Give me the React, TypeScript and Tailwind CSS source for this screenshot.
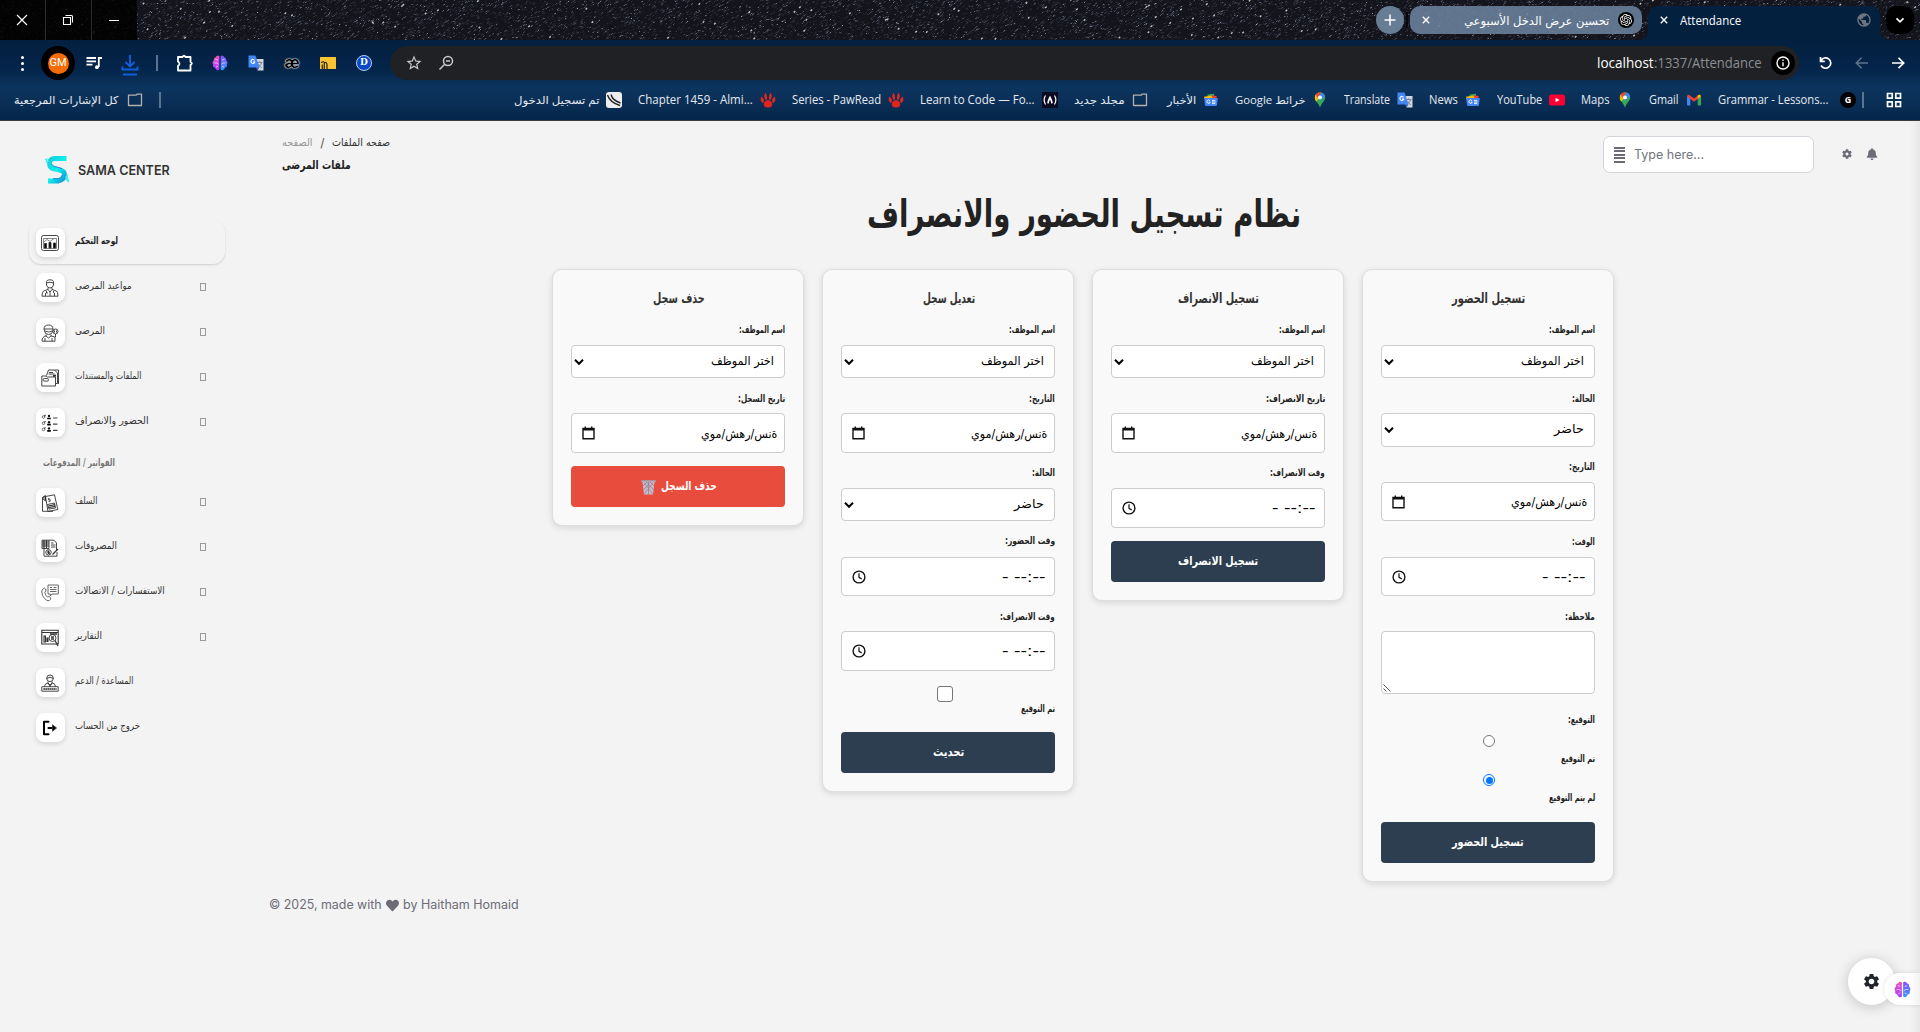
import { useLayoutEffect, useRef, useState } from "react";
import type { ReactNode } from "react";
import { MdStarOutline, MdPublic, MdSettings } from "react-icons/md";
import { FaBell, FaCog, FaHeart } from "react-icons/fa";
import { SiOpenai } from "react-icons/si";

/* Text set to a fixed advance width, whatever face ends up rendering it. */
function Fit({ w, children, rtl = false, className = "" }: { w: number; children: ReactNode; rtl?: boolean; className?: string }) {
  const ref = useRef<HTMLSpanElement>(null);
  const [scale, setScale] = useState(1);
  useLayoutEffect(() => {
    if (ref.current) setScale(w / ref.current.offsetWidth);
  }, [w]);
  return (
    <span dir="ltr" className={"inline-flex shrink-0 justify-start " + className} style={{ width: w }}>
      <span ref={ref} dir={rtl ? "rtl" : "ltr"} className="inline-block shrink-0 origin-left whitespace-nowrap" style={{ transform: `scaleX(${scale})` }}>
        {children}
      </span>
    </span>
  );
}

/* ---------- browser chrome ---------- */

function Stars() {
  let s = 7;
  const rnd = () => {
    s = (s * 16807) % 2147483647;
    return s / 2147483647;
  };
  const tints = ["#c9cbe0", "#8f93b5", "#55586f", "#3d4054", "#2b2d3c", "#e9e6e2"];
  const buckets = tints.map(() => "");
  for (let i = 0; i < 9500; i++) {
    const x = (rnd() * 1920).toFixed(1);
    const y = (rnd() * 40).toFixed(1);
    const k = Math.floor(Math.pow(rnd(), 0.6) * 5);
    const b = rnd() < 0.009 ? 5 : k;
    const r = b === 5 ? 1.5 : 1;
    buckets[b] += `M${x} ${y}l${r} ${-r}`;
  }
  return (
    <svg className="absolute inset-0 h-10 w-full" viewBox="0 0 1920 40">
      {buckets.map((d, i) => (
        <path key={i} d={d} stroke={tints[i]} strokeWidth={i === 5 ? 1.4 : 1} opacity={0.8} fill="none" />
      ))}
    </svg>
  );
}

const Brain = ({ className = "size-4" }: { className?: string }) => (
  <svg viewBox="0 0 16 16" className={className}>
    <defs>
      <linearGradient id="brainL" x1="0" y1="0" x2="0.3" y2="1">
        <stop offset="0" stopColor="#ff8a3c" />
        <stop offset="0.35" stopColor="#e14bd0" />
        <stop offset="1" stopColor="#b03cff" />
      </linearGradient>
      <linearGradient id="brainR" x1="0" y1="0" x2="0" y2="1">
        <stop offset="0" stopColor="#8b4dff" />
        <stop offset="1" stopColor="#2aa0ff" />
      </linearGradient>
    </defs>
    <path d="M7.4 1.2C6 .2 4.2.8 3.8 2.2C2 2.4 1.4 4 1.9 5.2C.3 6.2.1 8.3 1.2 9.4C.6 11.2 1.6 12.6 3.2 12.8C3.6 15.2 6.2 16 7.4 14.6Z" fill="url(#brainL)" />
    <path d="M8.6 1.2C10 .2 11.8.8 12.2 2.2C14 2.4 14.6 4 14.1 5.2C15.7 6.2 15.9 8.3 14.8 9.4C15.4 11.2 14.4 12.6 12.8 12.8C12.4 15.2 9.8 16 8.6 14.6Z" fill="url(#brainR)" />
    <path d="M3.5 4.5L6 5M2.5 8H5.500L6.200 9.500M4 12L6 11.300M12.500 4.500L10 5M13.500 8H10.500L9.800 9.500M12 12L10 11.300" stroke="#e6c6ff" strokeWidth="0.9" fill="none" />
  </svg>
);

const Translate = () => (
  <svg viewBox="0 0 16 16" className="size-4">
    <path d="M6 4H15.500V15.500H9.500Z" fill="#d3d7dc" />
    <path d="M9 7.500H14.500M11.700 6.300V7.500M13.600 7.500C13 10 11 11.800 9.800 12.500M10.500 9C11.200 10.800 12.500 12 13.800 12.600" stroke="#6f7d8c" strokeWidth="0.9" fill="none" />
    <path d="M.5.5H7.500L11.500 12.500H.5Z" fill="#4285f4" />
    <path d="M8 12.500H11.500L9.300 15.500Z" fill="#2a56c6" />
    <path d="M6.600 5.400A2 2 0 1 0 6.800 7H5" stroke="#fff" strokeWidth="1.100" fill="none" />
  </svg>
);

const Folder = () => (
  <svg viewBox="0 0 16 16" className="size-4" fill="none" stroke="#b4b0ad" strokeWidth="1.300" strokeLinejoin="round">
    <path d="M1.500 3.200H9L10 2.200H14.500V13.500H1.500Z" />
  </svg>
);

const Paw = () => (
  <svg viewBox="0 0 16 16" className="size-4" fill="#e0261e">
    <path d="M8 8.300C10.300 8.300 12.400 10.300 12.200 12.700C12 14.900 10 15.500 8 15.500S4 14.900 3.800 12.700C3.600 10.300 5.700 8.300 8 8.300Z" />
    <path d="M5.200 8L4.100 4L5.300.4L6.900 3.500L7 7.500ZM10.800 8L11.900 4L10.700.4L9.100 3.500L9 7.500ZM2.800 11.200L.7 8.500L1 4.200L3.200 6.200L4.200 9.500ZM13.200 11.200L15.300 8.500L15 4.200L12.800 6.200L11.800 9.500Z" />
  </svg>
);

const Pin = () => (
  <svg viewBox="0 0 16 16" className="size-4">
    <path d="M8 .3A5.300 5.300 0 0 1 13.200 5.500C13.200 9 9.500 10.500 8 15.800C6.500 10.500 2.800 9 2.800 5.500A5.300 5.300 0 0 1 8 .3Z" fill="#34a853" />
    <path d="M2.800 5.500A5.300 5.300 0 0 1 4 2L8 5.500L4.300 9.500C3.400 8.400 2.800 7.200 2.800 5.500Z" fill="#fbbc04" />
    <path d="M4 2A5.300 5.300 0 0 1 9.500.5L5 6Z" fill="#ea4335" />
    <path d="M9.500.5A5.300 5.300 0 0 1 13 4.200L8 9L6.500 6.500Z" fill="#4285f4" />
    <circle cx="8" cy="5.400" r="1.900" fill="#fff" />
  </svg>
);

const GNews = () => (
  <svg viewBox="0 0 16 16" className="size-4">
    <path d="M4.500 2.500L11 1.800V6H4.500Z" fill="#34a853" />
    <path d="M9 3L13.800 4.200L13 8H8Z" fill="#ea4335" />
    <path d="M1 4.800L8.500 3.500L10 8H2Z" fill="#fbbc04" />
    <path d="M1.200 6H14.800L14 13Q13.900 14 13 14H3Q2.100 14 2 13Z" fill="#4285f4" />
    <path d="M7 8.700A1.700 1.700 0 1 0 7.200 10.200H5.900M9 8.400H12.200M9 10H12.700M9 11.600H12.200" stroke="#fff" strokeWidth="0.900" fill="none" />
  </svg>
);

const YouTube = () => (
  <svg viewBox="0 0 16 16" className="size-4">
    <rect x="0" y="2.500" width="16" height="11" rx="2.500" fill="#ff0033" />
    <path d="M6.500 5.700L10.500 8L6.500 10.300Z" fill="#fff" />
  </svg>
);

const Gmail = () => (
  <svg viewBox="0 0 16 16" className="size-4">
    <path d="M1 4V12.500Q1 13.500 2 13.500H4.300V6Z" fill="#4285f4" />
    <path d="M15 4V12.500Q15 13.500 14 13.500H11.700V6Z" fill="#34a853" />
    <path d="M1 4.200Q1.500 2 3.500 3L8 6.400L12.500 3Q14.500 2 15 4.200L11.700 6.900L8 9.700L4.300 6.900Z" fill="#ea4335" />
    <path d="M11.700 3.600L12.500 3Q14.500 2 15 4.200L11.700 6.900Z" fill="#fbbc04" />
  </svg>
);

const Fcc = () => (
  <span className="flex size-4 items-center justify-center bg-[#0a0a23]">
    <svg viewBox="0 0 16 16" className="size-4" fill="none" stroke="#fff" strokeWidth="1.200">
      <path d="M3.500 3.500Q.8 8 3.500 12.500M12.500 3.500Q15.200 8 12.500 12.500" />
      <path d="M6 11.300Q6.500 8 8 5.500Q9.500 8 10 11.300" strokeWidth="1.700" />
    </svg>
  </span>
);

const Swoosh = () => (
  <svg viewBox="0 0 16 16" className="size-4">
    <rect width="16" height="16" rx="3" fill="#eceded" />
    <path d="M1.500 3Q4 10.500 14 13.500M5 2.500Q6.500 8.500 14.500 11" stroke="#222" strokeWidth="1.400" fill="none" />
  </svg>
);

const GDot = () => <span className="flex size-4 items-center justify-center rounded-full bg-black text-[9px] font-bold text-white">G</span>;

type Mark = { t: string; w: number; slot?: string; rtl?: boolean; icon: ReactNode };
const marks: Mark[] = [
  { t: "تم تسجيل الدخول", w: 85, rtl: true, icon: <Swoosh /> },
  { t: "Chapter 1459 - Almi...", w: 115, icon: <Paw /> },
  { t: "Series - PawRead", w: 89, icon: <Paw /> },
  { t: "Learn to Code — Fo...", w: 115, icon: <Fcc /> },
  { t: "مجلد جديد", w: 51, rtl: true, icon: <Folder /> },
  { t: "الأخبار", w: 29, slot: "pl-[3px]", rtl: true, icon: <GNews /> },
  { t: "خرائط Google", w: 70, rtl: true, icon: <Pin /> },
  { t: "Translate", w: 46, icon: <Translate /> },
  { t: "News", w: 29, icon: <GNews /> },
  { t: "YouTube", w: 45, icon: <YouTube /> },
  { t: "Maps", w: 29, icon: <Pin /> },
  { t: "Gmail", w: 30, icon: <Gmail /> },
  { t: "Grammar - Lessons...", w: 110, slot: "w-[115px]", icon: <GDot /> },
];

function TabStrip() {
  return (
    <div dir="ltr" className="relative flex h-10 items-center overflow-hidden bg-[#14151c]">
      <Stars />
      <div className="relative flex h-10 w-[137px] shrink-0 bg-black/85 text-white">
        <span className="flex w-[45.5px] items-center justify-center border-r border-[#2c2c30]">
          <svg viewBox="0 0 12 12" className="size-3" stroke="currentColor" strokeWidth="1.200"><path d="M1 1L11 11M11 1L1 11" /></svg>
        </span>
        <span className="flex w-[46px] items-center justify-center border-r border-[#2c2c30]">
          <svg viewBox="0 0 12 12" className="size-3" fill="none" stroke="currentColor" strokeWidth="1.100"><path d="M1.500 3.500H8.500V10.500H1.500ZM3.500 1.500H9.500Q10.500 1.500 10.500 2.500V8.500" /></svg>
        </span>
        <span className="flex flex-1 items-center justify-center">
          <span className="h-px w-2.5 bg-white" />
        </span>
      </div>
      <div className="relative ml-auto flex h-10 items-start pt-1.5 pr-1.5">
        <span className="flex size-7 items-center justify-center rounded-full bg-[#667d93] text-white">
          <svg viewBox="0 0 12 12" className="size-3" stroke="currentColor" strokeWidth="1.500"><path d="M6 .5V11.500M.5 6H11.500" /></svg>
        </span>
        <span className="mt-1.5 mr-0.5 ml-0.5 h-4 w-0.5 bg-black/70" />
        <div className="flex h-7 w-[232px] items-center rounded-[10px] bg-[#68809a]/90 pl-[12px] text-white">
          <svg viewBox="0 0 10 10" className="size-2 shrink-0" stroke="currentColor" strokeWidth="1.700"><path d="M1 1L9 9M9 1L1 9" /></svg>
          <Fit w={145} rtl className="mt-0.5 ml-[34px] font-['DejaVu_Sans'] text-[12px] leading-4">تحسين عرض الدخل الأسبوعي</Fit>
          <span className="ml-[9px] flex size-4 items-center justify-center rounded-full bg-black"><SiOpenai className="size-3" /></span>
        </div>
        <div className="relative ml-1.5 flex h-[34px] w-[232px] items-center rounded-t-[10px] bg-[#03203f] pb-1.5 pl-3 text-white">
          <svg viewBox="0 0 10 10" className="absolute bottom-0 -left-2.5 size-2.5" fill="#03203f"><path d="M10 0V10H0Q10 10 10 0Z" /></svg>
          <svg viewBox="0 0 10 10" className="absolute -right-2.5 bottom-0 size-2.5" fill="#03203f"><path d="M0 0V10H10Q0 10 0 0Z" /></svg>
          <svg viewBox="0 0 10 10" className="size-2 shrink-0" stroke="currentColor" strokeWidth="1.700"><path d="M1 1L9 9M9 1L1 9" /></svg>
          <Fit w={61} className="mt-0.5 ml-[12px] font-['Open_Sans'] text-[12px] leading-4">Attendance</Fit>
          <MdPublic className="mr-2 ml-auto size-4 text-[#6c7580]" />
        </div>
        <span className="ml-1.5 flex size-7 items-center justify-center rounded-[10px] bg-black text-white">
          <svg viewBox="0 0 10 10" className="size-2.5" fill="none" stroke="currentColor" strokeWidth="1.700"><path d="M1.500 3.300L5 6.800L8.500 3.300" /></svg>
        </span>
      </div>
    </div>
  );
}

function AddressRow() {
  return (
    <div className="flex h-[46px] items-center text-white">
      <span className="ml-[13px] flex w-[18px] flex-col items-center gap-[3px]">
        <i className="size-[3px] rounded-full bg-white" /><i className="size-[3px] rounded-full bg-white" /><i className="size-[3px] rounded-full bg-white" />
      </span>
      <span className="ml-[10px] flex size-[34px] items-center justify-center rounded-full bg-black">
        <span className="flex size-[21px] items-center justify-center rounded-full bg-[#f46c05] font-['Roboto'] text-[11px]">GM</span>
      </span>
      <svg viewBox="0 0 18 18" className="ml-[10px] size-[18px]" fill="none" stroke="#fff" strokeWidth="1.800">
        <path d="M1.500 4H11M1.500 7.300H11M1.500 10.600H7.500M13.800 13V4H17" /><circle cx="11.900" cy="13.200" r="1.900" fill="#fff" stroke="none" />
      </svg>
      <svg viewBox="0 0 18 22" className="mt-1 ml-[18px] h-[22px] w-[18px]" fill="none" stroke="#0f5fd6" strokeWidth="1.900">
        <path d="M9 1V12M4.500 8L9 12.500L13.500 8M1.500 12.500V15.500H16.500V12.500M2 20.500H16" />
      </svg>
      <span className="ml-[17px] h-4 w-[2px] bg-[#5b7590]" />
      <svg viewBox="0 0 18 18" className="ml-[18px] size-[18px]" fill="none" stroke="#fff" strokeWidth="1.800" strokeLinejoin="round">
        <path d="M2 3H6.500Q8 .5 9.500 3H14.500V8Q17.200 9 14.500 11V16.500H2V12Q5 9.800 2 7.500Z" />
      </svg>
      <Brain className="ml-[18px] size-4" />
      <span className="ml-5"><Translate /></span>
      <span className="ml-5 flex w-4 justify-center font-['Liberation_Sans'] text-[17px] leading-4 font-bold text-black [text-shadow:0_0_1px_#fff,0_0_1px_#fff,0_0_2px_#fff]">æ</span>
      <svg viewBox="0 0 16 12" className="ml-5 h-3 w-4"><rect width="16" height="12" rx="0.500" fill="#f7c531" /><path d="M2.300 12V7.500M4.300 12V5.500Q7 5 7 8V12M1 5.500L4 4.500" stroke="#2b2208" strokeWidth="1.200" fill="none" /></svg>
      <span className="ml-5 flex size-4 items-center justify-center rounded-full border border-[#b9cffc] bg-[#0a48c8] font-['DejaVu_Serif'] text-[9px] font-bold">D</span>
      <div className="ml-[18px] flex h-[34px] w-[1409px] items-center rounded-full bg-[#202124]">
        <MdStarOutline className="ml-[15px] size-[18px] text-[#c7c9cc]" />
        <svg viewBox="0 0 16 16" className="ml-[15px] size-4" fill="none" stroke="#c7c9cc" strokeWidth="1.500"><circle cx="10" cy="6" r="4.500" /><path d="M6.700 9.300L1.500 14.500M8 6H12" /></svg>
        <span className="ml-auto flex font-['Open_Sans'] text-[14px] leading-5">
          <Fit w={57}>localhost</Fit>
          <Fit w={108} className="text-[#8b8e92]">:1337/Attendance</Fit>
        </span>
        <span className="mr-1 ml-[9px] flex size-6 items-center justify-center rounded-full bg-black">
          <svg viewBox="0 0 14 14" className="size-3.5" fill="none" stroke="#fff" strokeWidth="1.400"><circle cx="7" cy="7" r="6" /><path d="M7 6.200V10.200M7 3.600V5" /></svg>
        </span>
      </div>
      <svg viewBox="0 0 14 14" className="ml-[20px] size-3.5" fill="none" stroke="#fff" strokeWidth="1.700"><path d="M1.500 1V5.300H5.800M1.800 5A5.200 5.200 0 1 1 2 9.500" /></svg>
      <svg viewBox="0 0 14 14" className="ml-[22px] size-3.5" fill="none" stroke="#5d748d" strokeWidth="1.500"><path d="M13 7H1.500M6.500 1.800L1.300 7L6.500 12.200" /></svg>
      <svg viewBox="0 0 14 14" className="ml-[22px] size-3.5" fill="none" stroke="#fff" strokeWidth="1.700"><path d="M1 7H12.500M7.500 1.800L12.700 7L7.500 12.200" /></svg>
    </div>
  );
}

function BookmarksRow() {
  return (
    <div className="flex h-[27px] items-center font-['Open_Sans','DejaVu_Sans'] text-[12px] leading-4 text-[#e6eaf0]">
      <Fit w={104} rtl className="mt-0.5 ml-[14px] font-['DejaVu_Sans'] text-[11px]">كل الإشارات المرجعية</Fit>
      <span className="ml-[9px]"><Folder /></span>
      <span className="ml-[16px] h-4 w-[2px] bg-[#5b7590]" />
      <div className="ml-auto flex gap-4">
        {marks.map((m, i) => (
          <span key={i} className="flex items-center gap-[7px]">
            <span className={m.slot}><Fit w={m.w} rtl={m.rtl} className={m.rtl ? "text-[11px]" : ""}>{m.t}</Fit></span>
            {m.icon}
          </span>
        ))}
      </div>
      <span className="ml-[6px] h-4 w-[2px] bg-[#5b7590]" />
      <svg viewBox="0 0 16 16" className="mr-[18px] ml-[22px] size-4" fill="none" stroke="#fff" strokeWidth="1.700"><path d="M1.500 1.500H6.200V6.200H1.500ZM9.800 1.500H14.500V6.200H9.800ZM1.500 9.800H6.200V14.500H1.500ZM9.800 9.800H14.500V14.500H9.800Z" /></svg>
    </div>
  );
}

/* ---------- sidebar ---------- */

const Ic = ({ children }: { children: ReactNode }) => (
  <svg viewBox="0 0 18 18" className="mr-px size-[18px]" fill="none" stroke="#333" strokeWidth="0.900">{children}</svg>
);

const icons: Record<string, ReactNode> = {
  dash: <Ic><rect x="0.500" y="1.500" width="17" height="15" rx="2" /><path d="M2.500 14.500V4.500H15.500V14.500ZM3 8L6 5.500L9 7.500L13 4.500" stroke="#777" /><path d="M3.500 14V9.500H5.500V14ZM8 14V8.500H10V14ZM12.500 14V9H14.500V14Z" fill="#000" /></Ic>,
  doctor: <Ic><path d="M5.500 4Q5 .8 9 .8T12.500 4V6Q12 9 9 9T5.500 6ZM5.500 4Q9 2.500 12.500 4M7 9V10.500L9 13L11 10.500V9M7 10.500L2.500 12Q1 13 1 17.200H17Q17 13 15.500 12L11 10.500M9 13V17M4.500 14V17M13.500 14V17M5.500 12V14H7M12.500 12V14" /></Ic>,
  patient: <Ic><path d="M3 5Q3 1 7.500 1T12 5V7Q11 10.500 7.500 10.500T3.500 7ZM3 5H12M4 7Q7.500 9 11.500 7M5 10.500V12L7.500 14L10 12V10.500M5 12Q1 12.500 1 17.200H14V13L10 12M4 14V17M11 14V17" /><circle cx="14.500" cy="7.500" r="2.500" /><path d="M14.500 10V13M13.500 6.500V8.500M15.500 6.500V8.500" /></Ic>,
  files: <Ic><path d="M.8 7H5L6.500 8H14.500V17H.8ZM5.500 6.500L7.500 1H13.500L16.500 4V14.500H15M13.500 1H17.500V15M8 3.500H12M7.500 5H13.500" /><rect x="2" y="9.500" width="5.500" height="2.600" rx="1.300" /><path d="M12 7L15 6.500" strokeWidth="1.800" /></Ic>,
  attend: <Ic><g stroke="#555" strokeWidth="0.800"><circle cx="2.500" cy="3" r="1.300" /><circle cx="2.500" cy="9.200" r="1.300" /><circle cx="2.500" cy="15.400" r="1.300" /></g><g fill="#111" stroke="none"><circle cx="8" cy="2" r="1.200" /><circle cx="8" cy="8.200" r="1.200" /><circle cx="8" cy="14.400" r="1.200" /></g><path d="M6.200 4.500H9.800M6.200 10.700H9.800M6.200 16.900H9.800" strokeWidth="1.700" stroke="#000" /><path d="M12 4H16.500M12 10.200H16.500M12 16.400H16.500M3 2.500L4.500 1M3 8.700L4.500 7.200M3 14.900L4.500 13.400" strokeWidth="1.200" stroke="#444" /></Ic>,
  advance: <Ic><path d="M4.500 2.500L13.500.8L16.800 15.500L7 17.500ZM1.500 17.300V3.500L4 2.500V6M1.500 17.300H12M6.500 10.500L13.500 9L14.500 14L8 15Z" /><path d="M8.500 4.500H7.500V5.800H9.200V7.300H7.500M2 3L4.500 1.500V7L2 5Z" /><path d="M7.500 12L14 10.600M8 13.500L14 12.400" strokeWidth="1.200" /></Ic>,
  spend: <Ic><path d="M1 1.200H8V9.500H1ZM8 1.200H13L15.500 4V11M3 9.500V17.200H16V13M10 4H12.500M10 6H14.500M10 8H14.500" /><path d="M1 3H8M1 5H8M1 7H8M3 1V9M5.500 1V9" strokeWidth="1.200" /><circle cx="7.500" cy="13.300" r="2.700" /><path d="M8.300 12.200H7V13.300H8.200V14.500H6.800M11.500 15.500L17 10" strokeWidth="1.200" /></Ic>,
  phone: <Ic><path d="M7 1H17.300V10H11L9.300 12V10H7ZM9 3.500H11M12.500 3.500H15.500M9 5.500H15.500M9 7.500H15.500M1.500 5.500L3.500 4Q5 4.500 5 7L3.800 8.500Q4.500 11.500 6.500 13L8 12.500Q10 13.500 9.800 15L8 16.800Q6 17 3.500 14.500T.8 8Q.8 6.500 1.500 5.500Z" stroke="#555" /></Ic>,
  report: <Ic><path d="M.8 1.200H17.200V15H.8ZM.8 3.500H17.200M3 13V7H4.500V13ZM6 13V9H7V13" strokeWidth="1.100" /><circle cx="11.500" cy="9" r="3.500" /><path d="M14 11.500L17 17M10 8H13M10 10H13M9 5H16" strokeWidth="1.300" /></Ic>,
  support: <Ic><circle cx="9" cy="4.300" r="3.300" /><path d="M5.500 4.500Q9 2 12.500 4.500M7 7.500V9L9 11L11 9V7.500M3.500 12.500Q3.500 9.500 7 9M14.500 12.500Q14.500 9.500 11 9M7 9L9 12.500L11 9M.8 12.700H17.200V17.200H.8Z" /><path d="M2.500 15H15.500" strokeWidth="1.800" strokeDasharray="1.300 0.700" /></Ic>,
  exit: <Ic><path d="M7.500 2.800H3V15.200H7.500M7.500 9H13" stroke="#000" strokeWidth="2" strokeLinejoin="round" strokeLinecap="round" /><path d="M11.500 5.800L15.500 9L11.500 12.200Z" fill="#000" /></Ic>,
};

function NavItem({ icon, t, w, open = true, active = false }: { icon: string; t: string; w: number; open?: boolean; active?: boolean }) {
  return (
    <div className={"flex h-[45px] items-center rounded-[12px] pr-[19px] pl-[7px] " + (active ? "text-[#222]" : "text-[#333]")}>
      <span className="flex size-[29px] shrink-0 items-center justify-center rounded-lg bg-white shadow-[0_2px_5px_rgba(0,0,0,0.13)]">{icons[icon]}</span>
      <Fit w={w} rtl className={"mb-[3px] ml-[10px] text-[10px] leading-4 " + (active ? "font-bold" : "")}>{t}</Fit>
      {open && <span className="mb-px ml-auto h-2 w-1.5 border border-[#9a9a9a]" />}
    </div>
  );
}

function Sidebar() {
  return (
    <aside className="flex w-[246px] shrink-0 flex-col pt-[34px] pl-[29px] font-['DejaVu_Sans']">
      <div className="flex h-[30px] items-center pl-[15px]">
        <svg viewBox="0 0 25 30" className="h-[30px] w-[25px]" fill="none">
          <defs>
            <linearGradient id="logo" x1="0" y1="0" x2="1" y2="1">
              <stop offset="0" stopColor="#16c9dc" /><stop offset="0.500" stopColor="#0ff2ea" /><stop offset="1" stopColor="#1289d8" />
            </linearGradient>
          </defs>
          <path d="M22.500 3.500H11Q5.500 3.500 5.500 8.500T11 14L15 15Q20.500 15.500 20.500 20T14.500 26H4" stroke="url(#logo)" strokeWidth="4.800" />
          <path d="M7.500 9Q9 11.700 12 11.800L18 13.500M9 23.700H14Q17.500 23 18.300 20" stroke="#0c7fc9" strokeWidth="0.900" />
          <path d="M1 5L3 4L2.500 7L5 6M23 19Q23 23 25 27Q21.500 25 22 21" stroke="#3eeef0" strokeWidth="1.200" />
        </svg>
        <Fit w={92} className="ml-[9px] font-['Inter'] text-[13px] leading-4 font-semibold text-[#333]">SAMA CENTER</Fit>
      </div>
      <nav className="mt-[36px] w-[196px]">
        <div className="-mt-px h-[44px] rounded-[12px] shadow-[0_1px_2px_rgba(0,0,0,0.15)]">
          <NavItem icon="dash" t="لوحه التحكم" w={43} open={false} active />
        </div>
        <div className="mt-[1px]">
          <NavItem icon="doctor" t="مواعيد المرضى" w={57} />
          <NavItem icon="patient" t="المرضى" w={30} />
          <NavItem icon="files" t="الملفات والمستندات" w={66} />
          <NavItem icon="attend" t="الحضور والانصراف" w={74} />
        </div>
        <div className="flex h-[35px] items-center pt-px pl-[14px] text-[10px] leading-4 text-[#777]">
          <Fit w={72} rtl className="font-bold">الفواتير / المدفوعات</Fit>
        </div>
        <NavItem icon="advance" t="السلف" w={22} />
        <NavItem icon="spend" t="المصروفات" w={42} />
        <NavItem icon="phone" t="الاستفسارات / الاتصالات" w={90} />
        <NavItem icon="report" t="التقارير" w={27} />
        <NavItem icon="support" t="المساعدة / الدعم" w={58} open={false} />
        <NavItem icon="exit" t="خروج من الحساب" w={65} open={false} />
      </nav>
    </aside>
  );
}

/* ---------- form cards ---------- */

function Card({ title, w, children }: { title: string; w: number; children: ReactNode }) {
  return (
    <section className="flex w-[252px] flex-col rounded-[10px] border border-[#ddd] bg-[#f9f9f9] px-[18px] py-[18px] shadow-[0_2px_6px_rgba(0,0,0,0.12)]">
      <h2 className="flex h-5 items-center justify-center pl-px text-[14px] font-bold text-[#333]"><Fit w={w} rtl>{title}</Fit></h2>
      {children}
    </section>
  );
}

function Label({ t, w, mt }: { t: string; w: number; mt: string }) {
  return <label className={"flex h-[14px] items-center justify-end pb-0.5 text-[10px] leading-[14px] font-bold text-[#222] " + mt}><Fit w={w} rtl>{t}</Fit></label>;
}

const box = "flex shrink-0 items-center rounded-[4px] border border-[#ccc] bg-white text-black ";

function Select({ t, w, cls }: { t: string; w: number; cls: string }) {
  return (
    <div className={box + "pr-[10px] pl-[2px] " + cls}>
      <svg viewBox="0 0 10 8" className="h-2 w-2.5" fill="none" stroke="#000" strokeWidth="2"><path d="M1 1.800L5 5.800L9 1.800" /></svg>
      <Fit w={w} rtl className="mb-0.5 ml-auto text-[12px] leading-5">{t}</Fit>
    </div>
  );
}

function DateBox({ cls }: { cls: string }) {
  return (
    <div className={box + "pr-[7px] pl-[10px] " + cls}>
      <svg viewBox="0 0 13 14" className="h-3.5 w-[13px]" fill="none" stroke="#111" strokeWidth="1.400"><path d="M1 2.500H12V12.800H1ZM3.300.5V3M9.700.5V3" /><path d="M1 3.300H12" strokeWidth="2.400" /></svg>
      <Fit w={76} rtl className="mt-px ml-auto text-[12px] leading-5">ةنس/رهش/موي</Fit>
    </div>
  );
}

function TimeBox({ cls }: { cls: string }) {
  return (
    <div className={box + "pr-[9px] pl-[10px] " + cls}>
      <svg viewBox="0 0 14 14" className="size-3.5" fill="none" stroke="#111" strokeWidth="1.400"><circle cx="7" cy="7" r="5.900" /><path d="M7 3.300V7.300L9.800 9" strokeWidth="1.200" /></svg>
      <Fit w={43} className="ml-auto font-['Liberation_Sans'] text-[15px] leading-5">- --:--</Fit>
    </div>
  );
}

function Button({ t, w, cls, children }: { t: string; w: number; cls: string; children?: ReactNode }) {
  return (
    <button className={"flex h-[41px] shrink-0 items-center justify-center gap-[5px] rounded-[4px] text-[12px] leading-5 font-bold text-white " + cls}>
      {children}
      <Fit w={w} rtl className="mb-0.5">{t}</Fit>
    </button>
  );
}

const Trash = () => (
  <svg viewBox="0 0 15 16" className="ml-0.5 h-4 w-[15px]">
    <path d="M1.500 3H13.500L12 15.500H3Z" fill="#c9bccb" />
    <path d="M3 4L12 15M5.500 3L12.500 11M9 3L13 7M12 4L3 15M9.500 3L2.500 11M6 3L2 7M7.500 3V15.500" stroke="#9a7f93" strokeWidth="0.800" />
    <path d="M.3 1.200H14.700V3.200H.3Z" fill="#a9a3b3" />
  </svg>
);

const emp = "اسم الموظف:";
const pick = "اختر الموظف";

function Forms() {
  return (
    <div className="mt-[25px] flex items-start justify-center gap-[18px]">
      <Card title="حذف سجل" w={52}>
        <Label t={emp} w={46} mt="mt-[16px]" />
        <Select t={pick} w={63} cls="mt-[7px] h-[33px]" />
        <Label t="تاريخ السجل:" w={47} mt="mt-[15px]" />
        <DateBox cls="mt-[6px] h-[40px]" />
        <Button t="حذف السجل" w={56} cls="mt-[13px] bg-[#e74c3c]"><Trash /></Button>
      </Card>
      <Card title="تعديل سجل" w={52}>
        <Label t={emp} w={46} mt="mt-[16px]" />
        <Select t={pick} w={63} cls="mt-[7px] h-[33px]" />
        <Label t="التاريخ:" w={26} mt="mt-[15px]" />
        <DateBox cls="mt-[6px] h-[40px]" />
        <Label t="الحالة:" w={23} mt="mt-[14px]" />
        <Select t="حاضر" w={30} cls="mt-[7px] h-[33px]" />
        <Label t="وقت الحضور:" w={50} mt="mt-[14px]" />
        <TimeBox cls="mt-[8px] h-[39px]" />
        <Label t="وقت الانصراف:" w={55} mt="mt-[15px]" />
        <TimeBox cls="mt-[6px] h-[40px]" />
        <span className="mt-[15px] mr-[102px] size-4 self-end rounded-[3px] border border-[#767676] bg-white" />
        <Label t="تم التوقيع" w={34} mt="mt-[1px]" />
        <Button t="تحديث" w={31} cls="mt-[15px] bg-[#2c3e50]" />
      </Card>
      <Card title="تسجيل الانصراف" w={81}>
        <Label t={emp} w={46} mt="mt-[16px]" />
        <Select t={pick} w={63} cls="mt-[7px] h-[33px]" />
        <Label t="تاريخ الانصراف:" w={59} mt="mt-[15px]" />
        <DateBox cls="mt-[6px] h-[40px]" />
        <Label t="وقت الانصراف:" w={55} mt="mt-[14px]" />
        <TimeBox cls="mt-[7px] h-[40px]" />
        <Button t="تسجيل الانصراف" w={80} cls="mt-[13px] bg-[#2c3e50]" />
      </Card>
      <Card title="تسجيل الحضور" w={73}>
        <Label t={emp} w={46} mt="mt-[16px]" />
        <Select t={pick} w={63} cls="mt-[7px] h-[33px]" />
        <Label t="الحالة:" w={23} mt="mt-[15px]" />
        <Select t="حاضر" w={30} cls="mt-[6px] h-[34px]" />
        <Label t="التاريخ:" w={26} mt="mt-[14px]" />
        <DateBox cls="mt-[7px] h-[39px]" />
        <Label t="الوقت:" w={23} mt="mt-[15px]" />
        <TimeBox cls="mt-[7px] h-[39px]" />
        <Label t="ملاحظة:" w={30} mt="mt-[15px]" />
        <div className={box + "mt-[6px] h-[63px] !items-end"}>
          <svg viewBox="0 0 9 9" className="mb-px ml-px size-2" stroke="#444" strokeWidth="1"><path d="M.5.5L8.500 8.500M.5 5L4 8.500" /></svg>
        </div>
        <Label t="التوقيع:" w={27} mt="mt-[20px]" />
        <span className="mt-[7px] ml-[102px] size-3 rounded-full border border-[#767676] bg-white" />
        <Label t="تم التوقيع" w={34} mt="mt-[6px]" />
        <span className="mt-[7px] mb-px ml-[102px] flex size-3 items-center justify-center rounded-full border border-[#0075ff] bg-white"><i className="size-[7px] rounded-full bg-[#0075ff]" /></span>
        <Label t="لم يتم التوقيع" w={46} mt="mt-[5px]" />
        <Button t="تسجيل الحضور" w={72} cls="mt-[16px] bg-[#2c3e50]" />
      </Card>
    </div>
  );
}

function TopBar() {
  return (
    <header className="flex h-[62px] items-start pl-9">
      <div className="flex flex-col pt-[12px] text-[11px] leading-5">
        <div className="flex items-center">
          <Fit w={31} rtl className="text-[#999]">الصفحه</Fit>
          <span className="w-[19px] text-center font-['Inter'] text-[12px] text-[#555]">/</span>
          <Fit w={58} rtl className="text-[#333]">صفحه الملفات</Fit>
        </div>
        <Fit w={69} rtl className="mt-0.5 text-[12px] leading-5 font-bold text-[#222]">ملفات المرضى</Fit>
      </div>
      <div className="mt-[15px] ml-auto flex h-[37px] w-[211px] items-center rounded-[7px] border border-[#d2d6da] bg-white pl-[10px]">
        <span className="flex h-4 w-[11px] flex-col justify-between">
          <i className="h-[2px] bg-[#6b6b78]" /><i className="h-[2px] bg-[#6b6b78]" /><i className="h-[2px] bg-[#6b6b78]" /><i className="h-[2px] bg-[#6b6b78]" /><i className="h-[2px] bg-[#6b6b78]" />
        </span>
        <Fit w={70} className="ml-[9px] font-['Inter'] text-[12.5px] leading-5 text-[#70757c]">Type here...</Fit>
      </div>
      <FaCog className="mt-[28px] ml-[28px] size-2.5 text-[#6c6c77]" />
      <FaBell className="mt-[27px] mr-[42px] ml-[14px] size-3 text-[#6c6c77]" />
    </header>
  );
}

export default function App() {
  return (
    <div className="relative flex h-[1032px] w-[1920px] flex-col overflow-hidden bg-[#f3f3f3]">
      <TabStrip />
      <div dir="ltr" className="h-[81px] border-b border-[#3a3b3f] bg-[linear-gradient(180deg,#03203f_0%,#04244a_35%,#0c345e_60%,#0b3058_75%,#04264a_100%)]">
        <AddressRow />
        <BookmarksRow />
      </div>
      <div className="flex flex-1">
        <Sidebar />
        <main className="flex flex-1 flex-col font-['DejaVu_Sans']">
          <TopBar />
          <h1 className="flex h-[61px] items-center justify-center pl-px text-[38px] leading-[60px] font-bold text-[#222]">
            <Fit w={434} rtl>نظام تسجيل الحضور والانصراف</Fit>
          </h1>
          <Forms />
          <footer className="mt-[13px] flex items-center pl-[23px] font-['Inter'] text-[12.5px] leading-5 text-[#6c6c77]">
            <Fit w={113}>© 2025, made with</Fit>
            <FaHeart className="mx-[4px] size-[13px]" />
            <Fit w={116}>by Haitham Homaid</Fit>
          </footer>
        </main>
      </div>
      <div className="absolute top-[958px] left-[1848px] flex size-[47px] items-center justify-center rounded-full bg-white pr-px shadow-[0_2px_14px_rgba(0,0,0,0.2)]">
        <MdSettings className="size-[19px] text-[#212529]" />
      </div>
      <div className="absolute top-[973px] right-0 flex h-8 w-9 items-center rounded-l-full bg-white pl-[10px] shadow-[0_0_4px_rgba(0,0,0,0.12)]">
        <Brain className="size-[17px]" />
      </div>
      <div className="absolute top-[121px] right-0 bottom-0 w-2.5 bg-gradient-to-r from-transparent to-black/5" />
    </div>
  );
}
